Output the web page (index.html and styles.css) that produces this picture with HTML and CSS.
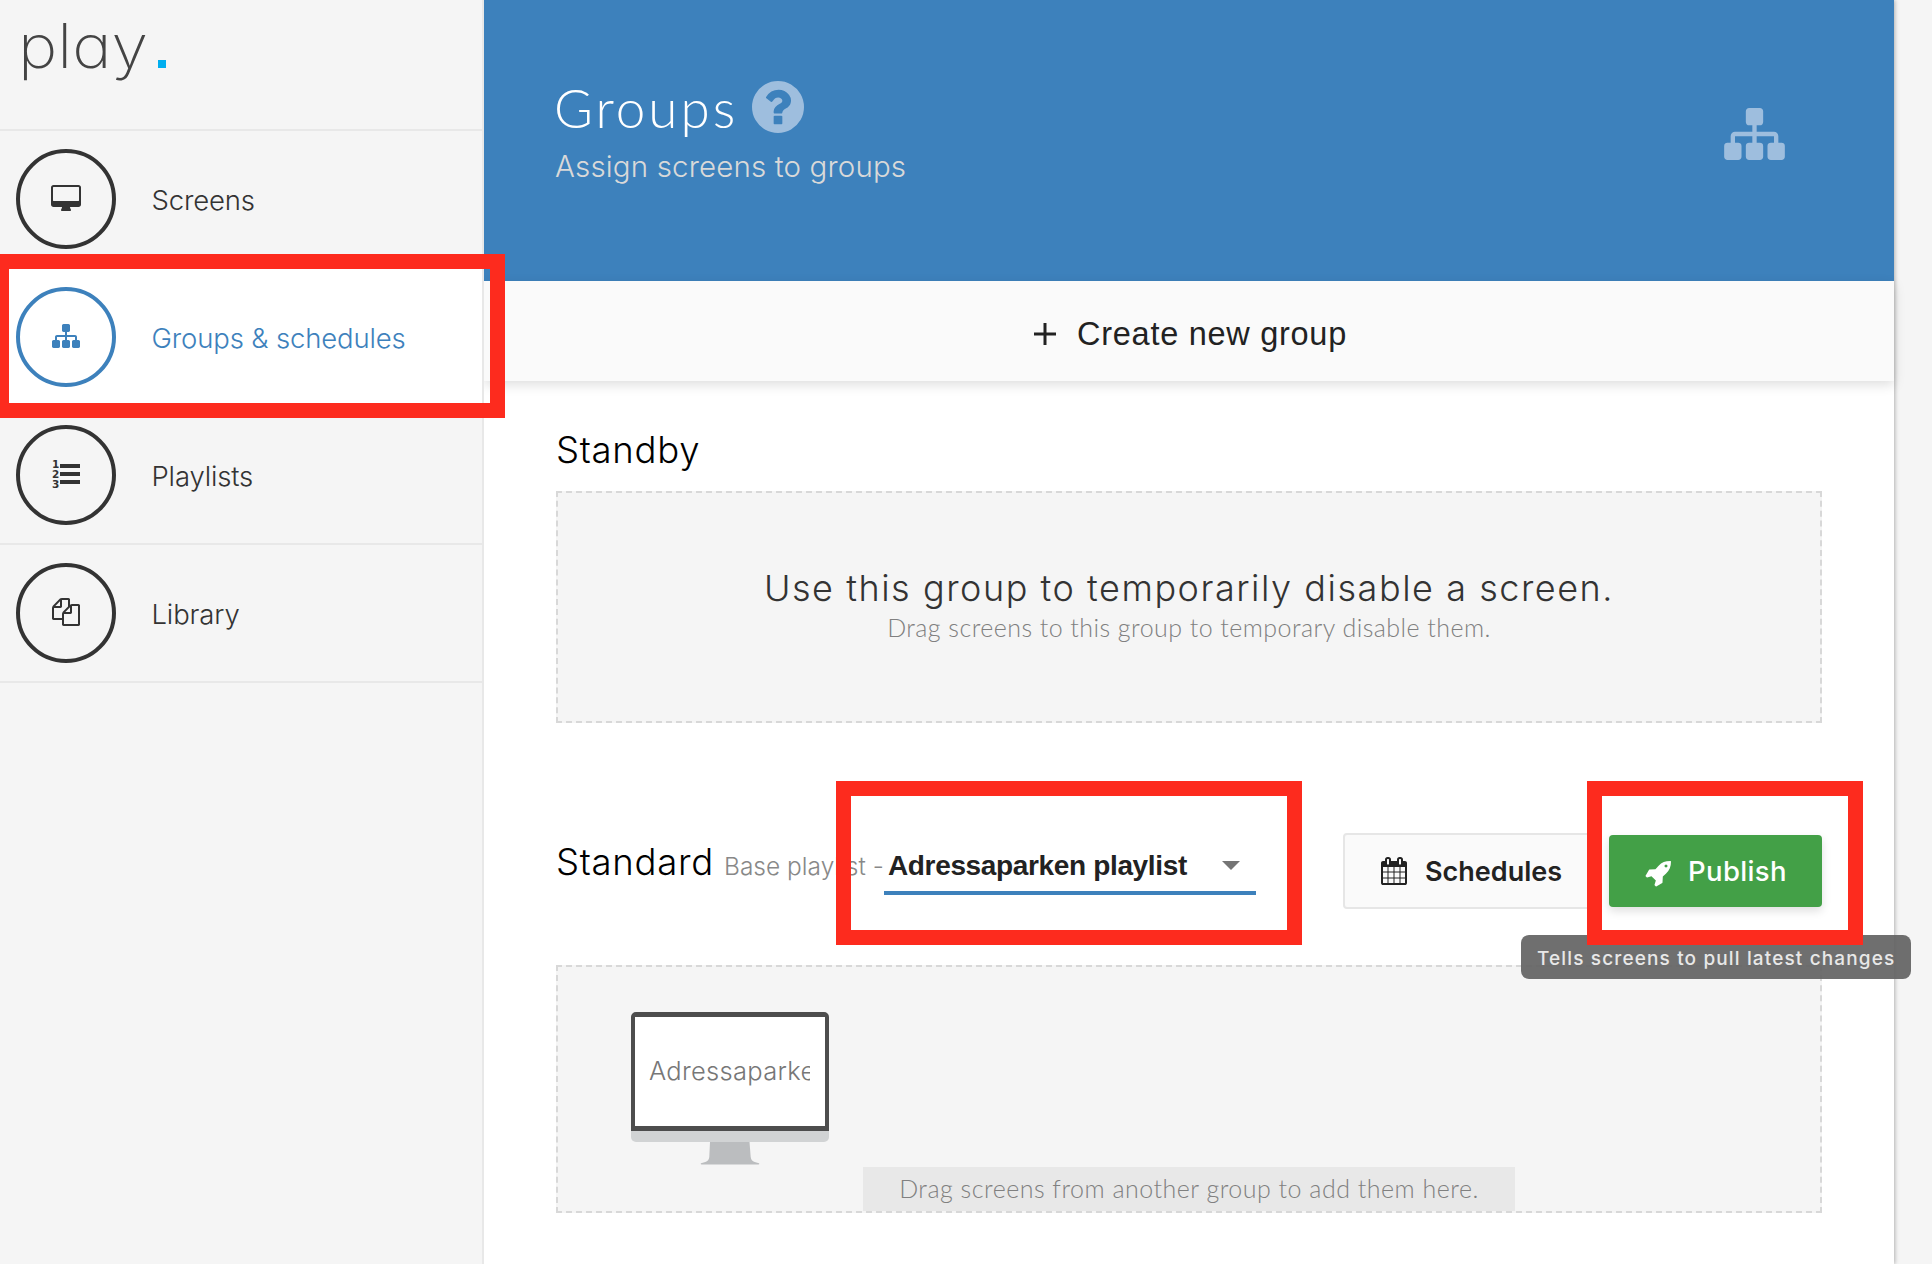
FILE: index.html
```
<!DOCTYPE html>
<html lang="en">
<head>
<meta charset="utf-8">
<title>Groups</title>
<link rel="stylesheet" href="styles.css">
</head>
<body>
<svg class="defs" aria-hidden="true">
  <symbol id="sitemap" viewBox="0 128 1792 1536"><path d="M1792 1248v320q0 40-28 68t-68 28h-320q-40 0-68-28t-28-68v-320q0-40 28-68t68-28h96v-192h-512v192h96q40 0 68 28t28 68v320q0 40-28 68t-68 28h-320q-40 0-68-28t-28-68v-320q0-40 28-68t68-28h96v-192h-512v192h96q40 0 68 28t28 68v320q0 40-28 68t-68 28h-320q-40 0-68-28t-28-68v-320q0-40 28-68t68-28h96v-192q0-52 38-90t90-38h512v-192h-96q-40 0-68-28t-28-68v-320q0-40 28-68t68-28h320q40 0 68 28t28 68v320q0 40-28 68t-68 28h-96v192h512q52 0 90 38t38 90v192h96q40 0 68 28t28 68z"/></symbol>
</svg>
<div class="app">
  <aside class="sidebar">
    <div class="logo"><span class="logo-word">play</span><span class="logo-dot"></span></div>
    <nav>
      <a class="item">
        <span class="ring"><svg width="30" height="26" viewBox="0 0 1920 1664"><path d="M1792 992v-832q0-13-9.5-22.5t-22.5-9.5h-1600q-13 0-22.5 9.5t-9.5 22.5v832q0 13 9.5 22.5t22.5 9.5h1600q13 0 22.5-9.5t9.5-22.5zm128-832v1088q0 66-47 113t-113 47h-544q0 37 16 77.5t32 71 16 43.5q0 26-19 45t-45 19h-512q-26 0-45-19t-19-45q0-14 16-44t32-70 16-78h-544q-66 0-113-47t-47-113v-1088q0-66 47-113t113-47h1600q66 0 113 47t47 113z"/></svg></span>
        <span class="item-label">Screens</span>
      </a>
      <a class="item active">
        <span class="ring"><svg width="28" height="24"><use href="#sitemap"/></svg></span>
        <span class="item-label">Groups &amp; schedules</span>
      </a>
      <a class="item">
        <span class="ring"><svg width="28" height="28" viewBox="0 0 28 28"><path d="M8 4h20v4H8zM8 12h20v4H8zM8 20h20v4H8z"/><g class="digits"><text x="0" y="8">1</text><text x="0" y="18">2</text><text x="0" y="28">3</text></g></svg></span>
        <span class="item-label">Playlists</span>
      </a>
      <a class="item">
        <span class="ring"><svg width="28" height="28" viewBox="0 0 1792 1792"><path d="M1696 384q40 0 68 28t28 68v1216q0 40-28 68t-68 28h-960q-40 0-68-28t-28-68v-288h-544q-40 0-68-28t-28-68v-672q0-40 20-88t48-76l408-408q28-28 76-48t88-20h416q40 0 68 28t28 68v328q68-40 128-40h416zm-544 213l-299 299h299v-299zm-640-384l-299 299h299v-299zm196 647l316-316v-416h-384v416q0 40-28 68t-68 28h-416v640h512v-256q0-40 20-88t48-76zm956 804v-1152h-384v416q0 40-28 68t-68 28h-416v640h896z"/></svg></span>
        <span class="item-label">Library</span>
      </a>
    </nav>
  </aside>
  <main class="main">
    <header class="hero">
      <div>
        <div class="hero-title">
          <h1>Groups</h1>
          <svg class="help" width="52" height="52" viewBox="128 128 1536 1536"><path d="M1024 1376v-192q0-14-9-23t-23-9h-192q-14 0-23 9t-9 23v192q0 14 9 23t23 9h192q14 0 23-9t9-23zm256-672q0-88-55.5-163t-138.5-116-170-41q-243 0-371 213-15 24 8 42l132 100q7 6 19 6 16 0 25-12 53-68 86-92 34-24 86-24 48 0 85.5 26t37.5 59q0 38-20 61t-68 45q-63 28-115.5 86.5t-52.5 125.5v36q0 14 9 23t23 9h192q14 0 23-9t9-23q0-19 21.5-49.5t54.5-49.5q32-18 49-28.5t46-35 44.5-48 28-60.5 12.5-81zm384 192q0 209-103 385.5t-279.5 279.5-385.5 103-385.5-103-279.5-279.5-103-385.5 103-385.5 279.5-279.5 385.5-103 385.5 103 279.5 279.5 103 385.5z"/></svg>
        </div>
        <p class="hero-sub">Assign screens to groups</p>
      </div>
      <svg class="hero-icon" width="61" height="52"><use href="#sitemap"/></svg>
    </header>
    <div class="create">
      <svg width="22" height="22" viewBox="0 0 22 22"><path d="M9.5 0h3v9.5H22v3h-9.5V22h-3v-9.500H0v-3h9.500z"/></svg>
      <span>Create new group</span>
    </div>
    <section class="content">
      <h2>Standby</h2>
      <div class="zone standby">
        <p class="zone-title">Use this group to temporarily disable a screen.</p>
        <p class="zone-sub">Drag screens to this group to temporary disable them.</p>
      </div>
      <div class="group-bar">
        <div class="group-name">
          <h2>Standard</h2>
          <span class="base">Base playlist -</span>
          <div class="select"><span>Adressaparken playlist</span><i class="caret"></i></div>
        </div>
        <div class="actions">
          <button class="btn schedules">
            <svg width="26" height="28" viewBox="0 0 1664 1792"><path d="M128 1664h288v-288h-288v288zm352 0h320v-288h-320v288zm-352-352h288v-320h-288v320zm352 0h320v-320h-320v320zm-352-384h288v-288h-288v288zm736 736h320v-288h-320v288zm-384-736h320v-288h-320v288zm768 736h288v-288h-288v288zm-384-352h320v-320h-320v320zm-352-864v-288q0-13-9.500-22.500t-22.500-9.500h-64q-13 0-22.500 9.500t-9.500 22.500v288q0 13 9.500 22.500t22.500 9.500h64q13 0 22.500-9.500t9.500-22.500zm736 864h288v-320h-288v320zm-384-384h320v-288h-320v288zm384 0h288v-288h-288v288zm32-480v-288q0-13-9.500-22.500t-22.500-9.500h-64q-13 0-22.500 9.500t-9.500 22.500v288q0 13 9.500 22.500t22.500 9.500h64q13 0 22.500-9.500t9.500-22.500zm384-64v1280q0 52-38 90t-90 38h-1408q-52 0-90-38t-38-90v-1280q0-52 38-90t90-38h128v-96q0-66 47-113t113-47h64q66 0 113 47t47 113v96h384v-96q0-66 47-113t113-47h64q66 0 113 47t47 113v96h128q52 0 90 38t38 90z"/></svg>
            Schedules
          </button>
          <div class="publish-wrap">
            <button class="btn publish">
              <svg width="26" height="26" viewBox="0 128 1664 1664"><path d="M1440 448q0-40-28-68t-68-28-68 28-28 68 28 68 68 28 68-28 28-68zm224-288q0 249-75.500 430.500t-253.500 360.500q-81 80-195 176l-20 379q-2 16-16 26l-384 224q-7 4-16 4-12 0-23-9l-64-64q-13-14-8-32l85-276-281-281-276 85q-3 1-9 1-14 0-23-9l-64-64q-17-19-5-39l224-384q10-14 26-16l379-20q96-114 176-195 188-187 358-258t431-71q14 0 24 9.500t10 22.500z"/></svg>
              Publish
            </button>
            <div class="tooltip">Tells screens to pull latest changes</div>
          </div>
        </div>
      </div>
      <div class="zone screens">
        <div class="monitor">
          <div class="panel"><span>Adressaparken</span></div>
          <div class="chin"></div>
          <svg class="stand" width="60" height="23" viewBox="0 0 60 23"><path d="M10 0h39.500l1.200 15q.4 4 4 5l4.300 1.200q1 .8-.5 1.300h-57q-1.500-.5-.5-1.300L5.300 20q3.600-1 4-5z"/></svg>
        </div>
        <p class="hint">Drag screens from another group to add them here.</p>
      </div>
    </section>
  </main>
</div>
<div class="mark mark-nav"></div>
<div class="mark mark-playlist"></div>
<div class="mark mark-publish"></div>
</body>
</html>
```
FILE: styles.css
```
* { box-sizing: border-box; }
body {
  margin: 0;
  height: 1264px;
  overflow: hidden;
  background: #f5f5f5;
  color: #333;
  font-family: Inter, "Liberation Sans", sans-serif;
}
h1, h2, p { margin: 0; font-weight: 300; white-space: nowrap; }
svg { display: block; fill: currentColor; flex: none; overflow: visible; }
.defs { position: absolute; width: 0; height: 0; }
.app { display: flex; height: 1264px; }

/* Sidebar */
.sidebar { width: 484px; flex: none; border-right: 2px solid #e8e8e8; }
.logo {
  display: flex;
  height: 131px;
  padding: 10px 0 0 18px;
  border-bottom: 2px solid #e8e8e8;
}
.logo-word {
  width: 140px;
  font-size: 61px;
  font-weight: 200;
  line-height: 73px;
  color: #444;
  font-feature-settings: "cv11";
  transform: scaleX(1.09);
  transform-origin: left;
}
.logo-dot { width: 8px; height: 8px; margin-top: 50px; background: #00aeef; }
.item {
  display: flex;
  align-items: center;
  height: 138px;
  padding-left: 16px;
  border-bottom: 2px solid #e8e8e8;
}
.item.active { background: #fff; color: #3d81bc; }
.ring {
  display: flex;
  align-items: center;
  justify-content: center;
  width: 100px;
  height: 100px;
  border: 4px solid currentColor;
  border-radius: 50%;
}
.ring svg { margin-top: -2px; }
.digits { font: bold 10.5px "DejaVu Sans", sans-serif; }
.item-label {
  margin-left: 35.5px;
  padding-top: 2px;
  font-size: 27.5px;
  font-weight: 300;
  letter-spacing: -0.15px;
}

/* Main column */
.main {
  width: 1410px;
  flex: none;
  background: #fff;
  box-shadow: 1px 0 4px rgba(0, 0, 0, .28);
  clip-path: inset(0 -40px 0 0);
}
.hero {
  display: flex;
  justify-content: space-between;
  height: 281px;
  padding: 76px 109px 0 72px;
  background: #3d81bc;
  color: #fff;
}
.hero-title { display: flex; align-items: center; gap: 14px; }
h1 {
  margin-left: -2px;
  font-family: Lato, sans-serif;
  font-size: 53px;
  line-height: 64px;
  letter-spacing: 3px;
}
.help { margin-bottom: 3px; color: #9ebede; }
.hero-sub {
  margin: 8px 0 0 -1px;
  font-size: 29.5px;
  line-height: 36px;
  letter-spacing: .15px;
  color: #d9d9d9;
}
.hero-icon { margin-top: 32px; color: #9ebede; }
.create {
  display: flex;
  align-items: center;
  justify-content: center;
  gap: 21px;
  height: 100px;
  padding: 6px 0 0 3px;
  background: #fafafa;
  box-shadow: 0 4px 11px rgba(0, 0, 0, .13);
  color: #222;
  font: 32.5px "Liberation Sans", sans-serif;
  letter-spacing: .72px;
}
.content { padding: 44px 72px 0; }
h2 {
  font-size: 36.5px;
  line-height: 50px;
  letter-spacing: .7px;
  color: #000;
}
.zone { border: 2px dashed #d8d8d8; background: #f5f5f5; }
.standby { height: 232px; margin-top: 16px; padding-top: 72px; text-align: center; }
.zone-sub, .hint { font-family: Lato, sans-serif; }
.zone-title { font-size: 36px; line-height: 46px; letter-spacing: 1.54px; }
.zone-sub {
  margin-top: 1px;
  font-size: 25px;
  line-height: 30px;
  letter-spacing: .45px;
  color: #808080;
}

/* Group toolbar */
.group-bar {
  display: flex;
  justify-content: space-between;
  height: 76px;
  margin: 110px 0 56px;
}
.group-name { display: flex; align-items: baseline; padding-top: 4px; }
.group-name h2 { width: 168px; }
.base {
  width: 160px;
  font-size: 24.5px;
  font-weight: 300;
  white-space: nowrap;
  color: #888;
}
.select {
  display: flex;
  align-items: baseline;
  justify-content: space-between;
  width: 372px;
  padding: 0 16px 9px 4px;
  border-bottom: 4px solid #3d81bc;
  color: #222;
  font: bold 28px/32px "Liberation Sans", sans-serif;
  letter-spacing: -.35px;
}
.caret {
  margin-bottom: 1px;
  align-self: center;
  border: 9px solid transparent;
  border-top-color: #757575;
  border-bottom: 0;
}
.actions { display: flex; align-items: center; gap: 16px; }
.btn {
  display: flex;
  align-items: center;
  border-radius: 4px;
  font: 600 27px Inter, sans-serif;
}
.schedules {
  gap: 18px;
  width: 250px;
  height: 76px;
  padding: 0 0 0 36px;
  border: 2px solid #e6e6e6;
  background: #fafafa;
  color: #222;
}
.publish-wrap { position: relative; }
.publish {
  gap: 17px;
  width: 213px;
  height: 72px;
  padding: 0 0 0 36px;
  border: 0;
  background: #43a047;
  box-shadow: 0 4px 10px rgba(0, 0, 0, .13);
  color: #fff;
  font-size: 27.5px;
  font-weight: 500;
  letter-spacing: .35px;
}
.publish svg { margin-top: 5px; }
.tooltip {
  position: absolute;
  z-index: 2;
  top: 100px;
  left: -88px;
  width: 390px;
  height: 44px;
  padding: 3px 0 0 16px;
  border-radius: 8px;
  background: rgba(97, 97, 97, .91);
  color: #e8e8e8;
  font: 500 19px/41px Inter, sans-serif;
  letter-spacing: 1.14px;
  white-space: nowrap;
}

/* Screens in the group */
.screens {
  display: flex;
  flex-direction: column;
  justify-content: space-between;
  height: 248px;
  padding-top: 45px;
}
.monitor { width: 198px; margin-left: 73px; }
.panel {
  display: flex;
  align-items: center;
  height: 119px;
  padding: 0 15px 2px 14px;
  border: 5px solid #4d4d4d;
  border-width: 5px 4px;
  border-radius: 5px 5px 0 0;
  background: #fff;
}
.panel span {
  overflow: hidden;
  width: 161px;
  font-size: 25.5px;
  font-weight: 300;
  letter-spacing: .3px;
  color: #777;
}
.chin { height: 11px; border-radius: 0 0 5px 5px; background: #d1d3d4; }
.stand { margin: 0 auto; color: #bbbdbf; }
.hint {
  align-self: center;
  width: 652px;
  height: 44px;
  background: #e8e8e8;
  color: #808080;
  font-size: 25px;
  line-height: 42px;
  letter-spacing: .5px;
  text-align: center;
}

/* Highlight frames drawn over the page */
.mark { position: absolute; z-index: 10; border: 15px solid #fd2b1e; }
.mark-nav { top: 254px; left: -6px; width: 511px; height: 164px; }
.mark-playlist { top: 781px; left: 836px; width: 466px; height: 164px; }
.mark-publish { top: 781px; left: 1587px; width: 276px; height: 164px; }
```
